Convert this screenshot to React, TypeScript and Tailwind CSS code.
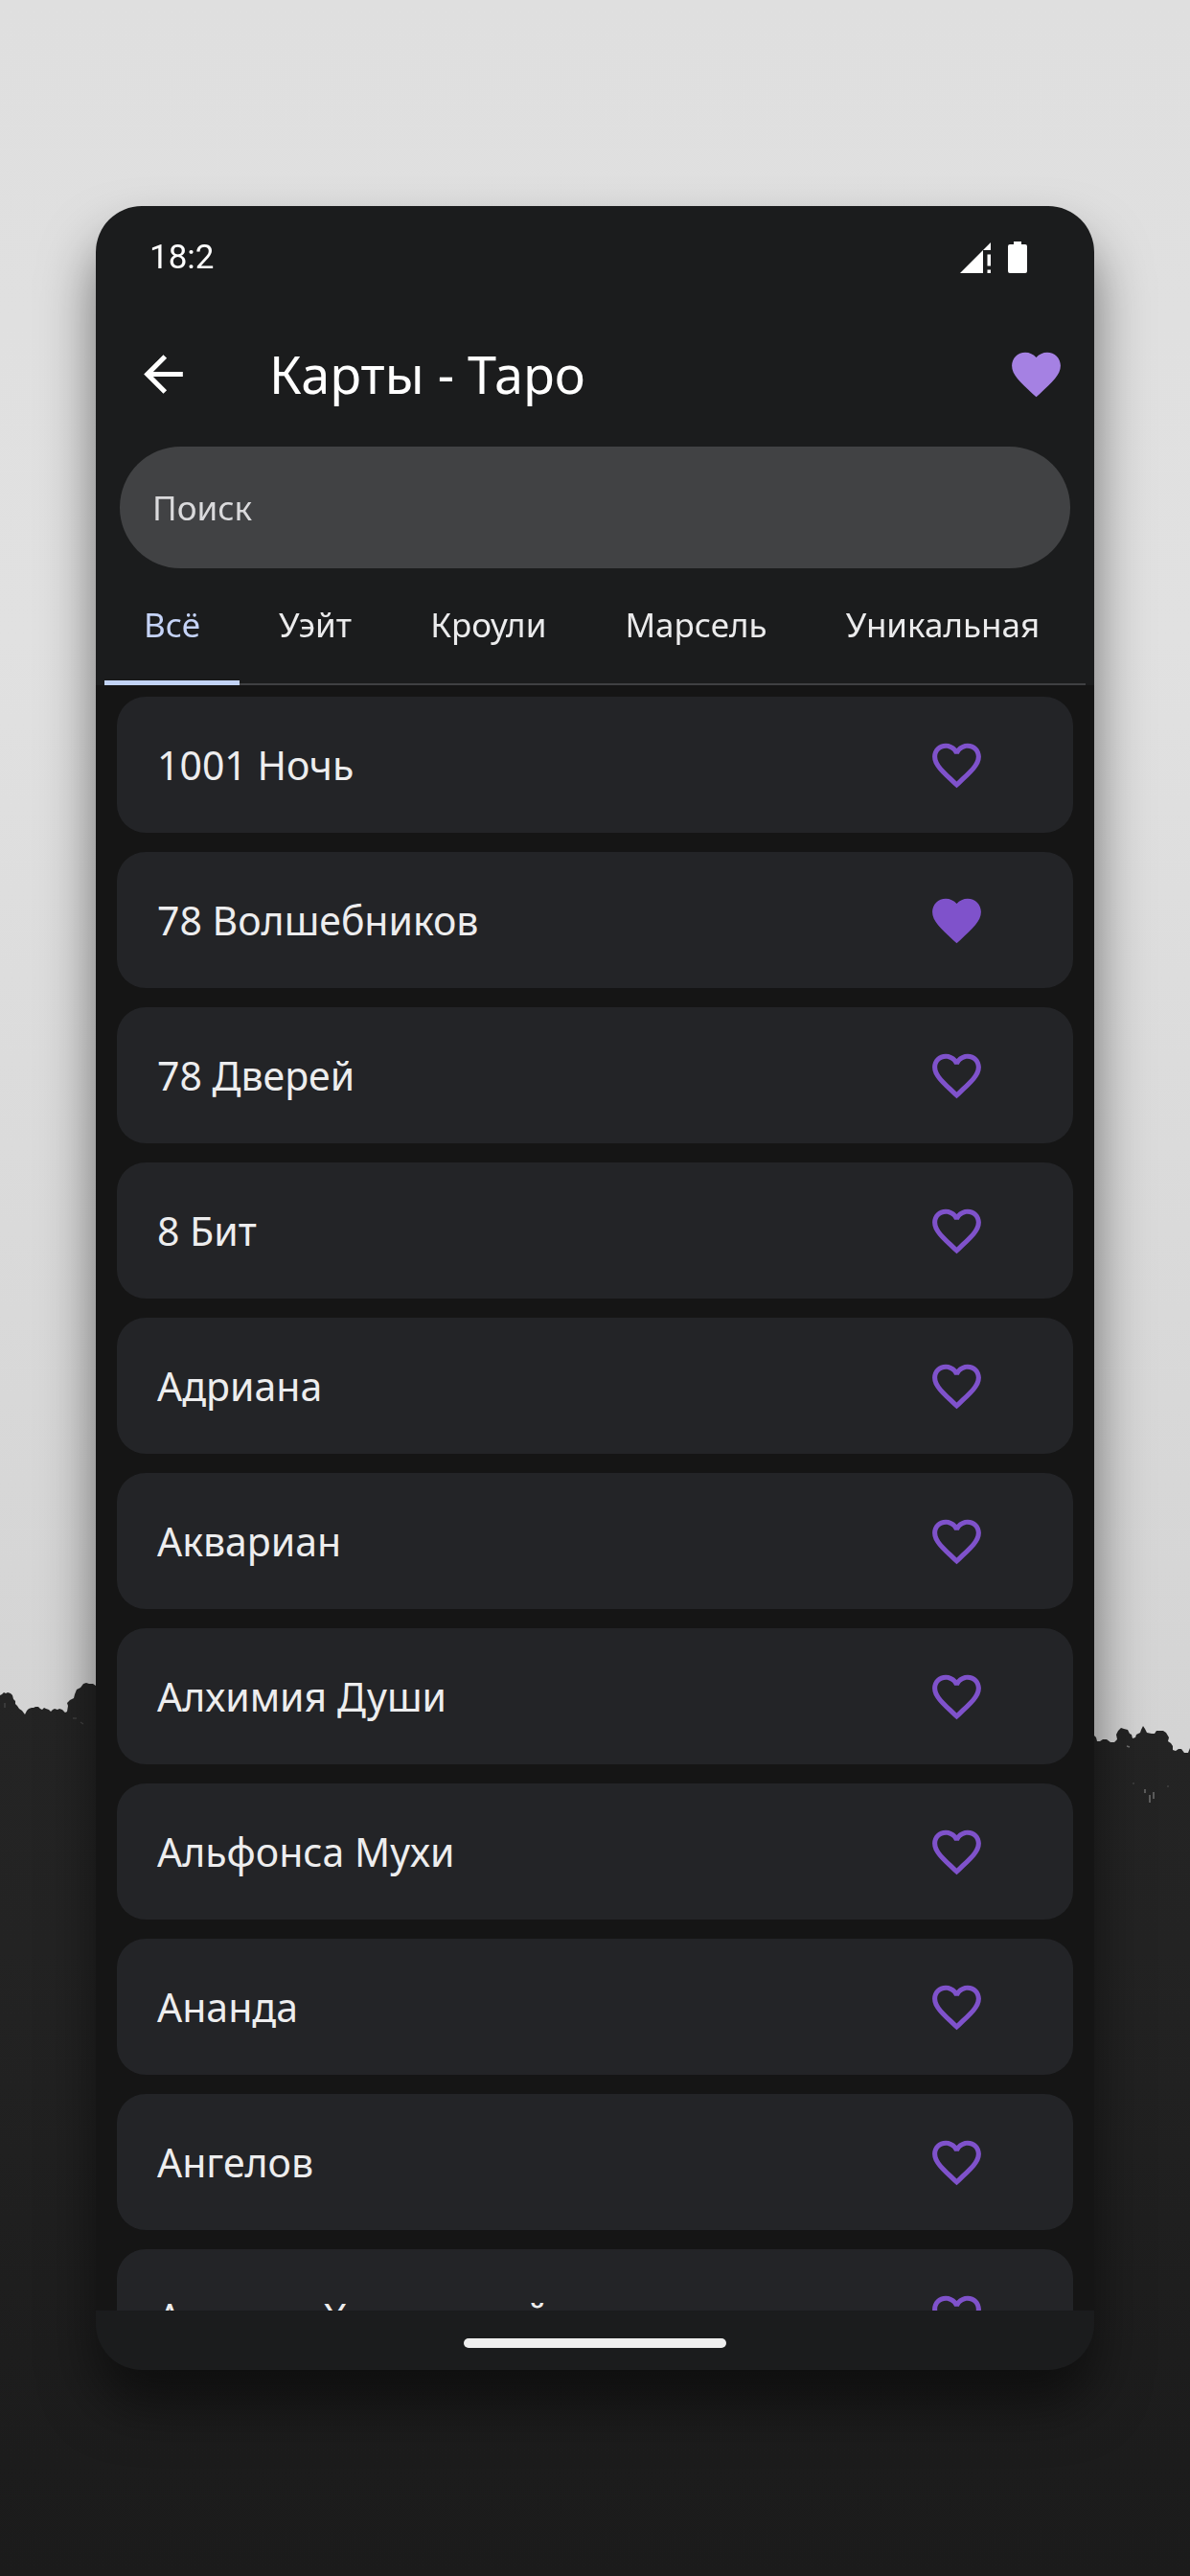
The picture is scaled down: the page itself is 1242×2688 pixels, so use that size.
import { clsx } from 'clsx'
import React, { useState } from 'react'

interface Deck {
  name: string
  favorite?: boolean
}

const tabs = ['Всё', 'Уэйт', 'Кроули', 'Марсель', 'Уникальная']

const initialDecks: Deck[] = [
  { name: '1001 Ночь' },
  { name: '78 Волшебников', favorite: true },
  { name: '78 Дверей' },
  { name: '8 Бит' },
  { name: 'Адриана' },
  { name: 'Аквариан' },
  { name: 'Алхимия Души' },
  { name: 'Альфонса Мухи' },
  { name: 'Ананда' },
  { name: 'Ангелов' },
  { name: 'Ангелов Хранителей' },
]

const HEART =
  'M12 21.35l-1.45-1.32C5.4 15.36 2 12.28 2 8.5 2 5.42 4.42 3 7.5 3c1.74 0 3.41.81 4.5 2.09C13.09 3.81 14.76 3 16.5 3 19.58 3 22 5.42 22 8.5c0 3.78-3.4 6.86-8.55 11.54L12 21.35z'
const HEART_OUTLINE =
  'M16.5 3c-1.74 0-3.41.81-4.5 2.09C10.91 3.81 9.24 3 7.5 3 4.42 3 2 5.42 2 8.5c0 3.78 3.4 6.86 8.55 11.54L12 21.35l1.45-1.32C18.6 15.36 22 12.28 22 8.5 22 5.42 19.58 3 16.5 3zm-4.4 15.55l-.1.1-.1-.1C7.14 14.24 4 11.39 4 8.5 4 6.5 5.5 5 7.5 5c1.54 0 3.04.99 3.57 2.36h1.87C13.46 5.99 14.96 5 16.5 5c2 0 3.5 1.5 3.5 3.5 0 2.89-3.14 5.74-7.9 10.05z'

const TREES =
  'M0 1769L2 1768 4 1766 6 1767 8 1766 11 1767 13 1769 14 1773 16 1775 16 1778 18 1780 20 1783 23 1785 26 1789 28 1785 30 1783 33 1782 35 1782 37 1781 40 1781 42 1783 44 1784 46 1782 48 1783 51 1784 53 1786 55 1784 57 1783 60 1784 62 1783 65 1784 68 1787 70 1786 71 1780 70 1777 73 1774 77 1772 78 1768 80 1763 84 1761 87 1757 90 1756 93 1757 97 1757 100 1759V1811H1142L1144 1813 1145 1817 1148 1817 1151 1815 1155 1815 1159 1818 1163 1818 1166 1815 1165 1810 1167 1806 1170 1803 1173 1804 1177 1805 1179 1809 1181 1810 1182 1814 1185 1813 1186 1810 1190 1808 1191 1805 1193 1801 1195 1804 1197 1808 1202 1809 1205 1809 1207 1806 1210 1806 1214 1806 1217 1808 1220 1813 1219 1817 1222 1819 1224 1822 1224 1826 1227 1827 1230 1825 1233 1825 1236 1829 1240 1829 1242 1824V2688H0z'

const Heart: React.FC<{ filled?: boolean }> = ({ filled }) => (
  <svg viewBox="0 0 24 24" className="size-[61px]" fill="currentColor" aria-hidden="true">
    <path d={filled ? HEART : HEART_OUTLINE} />
  </svg>
)

const Backdrop: React.FC = () => (
  <svg
    viewBox="0 0 1242 2688"
    preserveAspectRatio="none"
    className="absolute inset-0 -z-10 h-full w-full"
    aria-hidden="true"
  >
    <defs>
      <linearGradient id="sky" x1="0" y1="0" x2="0" y2="1">
        <stop offset="0" stopColor="#dfdfdf" />
        <stop offset="0.35" stopColor="#e1e1e1" />
        <stop offset="1" stopColor="#d3d3d3" />
      </linearGradient>
      <linearGradient id="ground" x1="0" y1="0" x2="0" y2="1">
        <stop offset="0" stopColor="#242424" />
        <stop offset="0.3" stopColor="#232323" />
        <stop offset="0.75" stopColor="#1d1d1d" />
        <stop offset="1" stopColor="#1b1b1b" />
      </linearGradient>
    </defs>
    <rect width="1242" height="1900" fill="url(#sky)" />
    <path d={TREES} fill="url(#ground)" />
    <g stroke="#a0a0a0" strokeWidth="1.5" opacity="0.6">
      <path d="M1195 1867v4M1200 1873v8M1204 1870v7M1176 1822l3 1" />
      <path d="M5 1777v5M76 1793h4M84 1797l3 2M1182 1861h2M1218 1864h2" opacity="0.4" />
    </g>
  </svg>
)

const StatusBar: React.FC = () => (
  <div className="flex h-[107px] shrink-0 items-center justify-between pr-[70px] pl-[56px]">
    <span className="font-['Roboto',sans-serif] text-[35px] leading-10 text-white">18:2</span>
    <div className="flex items-center gap-[18px] text-white">
      <svg viewBox="0 0 32 32" className="size-8" fill="currentColor" role="img" aria-label="Сигнал">
        <path d="M0 32L24 8v24zM24 8l8-8v8zM28.5 12.5H32v12h-3.5zM28.5 28.5H32V32h-3.5z" />
      </svg>
      <svg viewBox="0 0 20 33" className="h-[33px] w-5" fill="currentColor" role="img" aria-label="Батарея">
        <path d="M6 0h8v3h4a2 2 0 0 1 2 2v26a2 2 0 0 1-2 2H2a2 2 0 0 1-2-2V5a2 2 0 0 1 2-2h4z" />
      </svg>
    </div>
  </div>
)

const DeckCard: React.FC<{ deck: Deck; onToggle: () => void }> = ({ deck, onToggle }) => (
  <li className="flex h-[142px] shrink-0 items-center justify-between rounded-[30px] bg-[#232427] pr-[91px] pl-[42px]">
    <span className="text-[41px] leading-[52px] text-[#ededee]">{deck.name}</span>
    <button
      type="button"
      aria-label={`В избранное: ${deck.name}`}
      aria-pressed={!!deck.favorite}
      className="text-[#7f52cb]"
      onClick={onToggle}
    >
      <Heart filled={deck.favorite} />
    </button>
  </li>
)

const App: React.FC = () => {
  const [active, setActive] = useState(tabs[0])
  const [decks, setDecks] = useState(initialDecks)

  const toggle = (name: string) =>
    setDecks(list => list.map(d => (d.name === name ? { ...d, favorite: !d.favorite } : d)))

  return (
    <div className="relative isolate flex h-screen flex-col px-[100px] py-[215px] font-['Noto_Sans',sans-serif]">
      <Backdrop />
      <main className="flex min-h-0 flex-1 flex-col overflow-hidden rounded-[48px] bg-[#1b1c1d] shadow-[0_36px_56px_rgba(0,0,0,0.5)]">
        <StatusBar />

        <header className="flex h-[136px] shrink-0 items-center pr-[30px] pl-[40px]">
          <button type="button" aria-label="Назад" className="text-white">
            <svg viewBox="0 0 24 24" className="size-[61px]" fill="currentColor" aria-hidden="true">
              <path d="M20 11H7.83l5.59-5.59L12 4l-8 8 8 8 1.41-1.41L7.83 13H20v-2z" />
            </svg>
          </button>
          <h1 className="ml-20 flex-1 text-[54px] leading-[72px] text-white">Карты - Таро</h1>
          <button type="button" aria-label="Избранное" className="text-[#a581e3]">
            <Heart filled />
          </button>
        </header>

        <div className="mt-2 shrink-0 px-[25px]">
          <input
            type="search"
            aria-label="Поиск"
            placeholder="Поиск"
            className="block h-[127px] w-full rounded-full bg-[#414244] px-[34px] text-[35px] text-white outline-none placeholder:text-[#dadadc]"
          />
        </div>

        <div className="shrink-0 px-[9px]">
          <div role="tablist" className="flex h-[122px] border-b-2 border-[#3f4042]">
            {tabs.map(tab => (
              <button
                key={tab}
                type="button"
                role="tab"
                aria-selected={tab === active}
                onClick={() => setActive(tab)}
                className={clsx(
                  '-mb-0.5 border-b-5 px-[41px] text-[35px] leading-10 whitespace-nowrap',
                  tab === active ? 'border-[#c2d3f6] text-[#c5d3f7]' : 'border-transparent text-[#ebebec]',
                )}
              >
                {tab}
              </button>
            ))}
          </div>
        </div>

        <ul className="flex min-h-0 flex-1 flex-col gap-5 overflow-hidden bg-[#151515] px-[22px] pt-3">
          {decks.map(deck => (
            <DeckCard key={deck.name} deck={deck} onToggle={() => toggle(deck.name)} />
          ))}
        </ul>

        <div className="flex h-[62px] shrink-0 items-center justify-center pt-1.5">
          <div className="h-[10px] w-[274px] rounded-full bg-[#eeeeee]" />
        </div>
      </main>
    </div>
  )
}

export default App
